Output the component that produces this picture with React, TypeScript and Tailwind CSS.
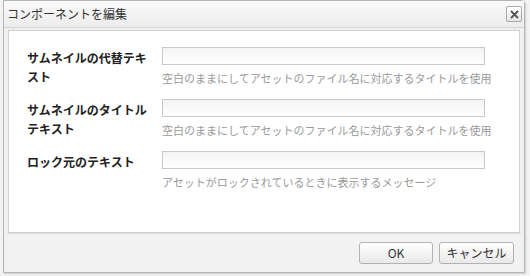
import React from 'react';

const fields = [
    { label: 'サムネイルの代替テキスト', help: '空白のままにしてアセットのファイル名に対応するタイトルを使用' },
    { label: 'サムネイルのタイトルテキスト', help: '空白のままにしてアセットのファイル名に対応するタイトルを使用' },
    { label: 'ロック元のテキスト', help: 'アセットがロックされているときに表示するメッセージ' },
];

const App = () => {
    return (
        <div
            className="w-[530px] h-[276px] bg-[#f3f3f3] overflow-hidden"
            style={{ fontFamily: '"Noto Sans CJK JP", "Noto Sans", sans-serif' }}
        >
            <div className="ml-[3px] w-[522px] h-[273px] flex flex-col border border-[#b4b4b4] rounded-tr-[4px] bg-[#f0f0f0] shadow-[1px_1px_2px_rgba(0,0,0,0.15)]">
                {/* Title bar */}
                <div className="h-[27px] flex items-center justify-between pl-[3px] pr-[2px] bg-gradient-to-b from-[#fafafa] to-[#ececec] border-b border-[#d4d4d4]">
                    <span className="text-[12px] text-[#333] leading-none">コンポーネントを編集</span>
                    <button className="w-[16px] h-[16px] flex items-center justify-center border border-[#a9a9a9] rounded-[2px] bg-gradient-to-b from-white to-[#e4e4e4]">
                        <svg width="9" height="9" viewBox="0 0 9 9">
                            <path d="M1 1L8 8M8 1L1 8" stroke="#555" strokeWidth="1.8" />
                        </svg>
                    </button>
                </div>

                {/* Body */}
                <div className="mx-[4px] mt-[2px] h-[203px] bg-white border border-[#d0d0d0] pl-[18px] pt-[16px]">
                    <div className="flex flex-col gap-[13px]">
                        {fields.map((f) => (
                            <div key={f.label} className="flex">
                                <div className="w-[135px] pr-[10px] pt-[1px] text-[12px] font-bold leading-[19px] text-[#222]">
                                    {f.label}
                                </div>
                                <div className="flex flex-col">
                                    <input
                                        className="w-[323px] h-[18px] border border-[#c9c9c9] bg-gradient-to-b from-[#f3f3f3] to-white outline-none"
                                        type="text"
                                    />
                                    <div className="mt-[5px] text-[11px] leading-[16px] text-[#9a9a9a] whitespace-nowrap">
                                        {f.help}
                                    </div>
                                </div>
                            </div>
                        ))}
                    </div>
                </div>

                {/* Footer */}
                <div className="flex-1 mx-[3px] mb-[1px] bg-[#f2f2f2] border-t border-[#dadada] flex items-center justify-end gap-[6px] pr-[7px]">
                    <button className="w-[74px] h-[22px] border border-[#b2b2b2] rounded-[3px] bg-gradient-to-b from-white to-[#e9e9e9] text-[12px] text-[#333]">
                        OK
                    </button>
                    <button className="w-[75px] h-[22px] border border-[#b2b2b2] rounded-[3px] bg-gradient-to-b from-white to-[#e9e9e9] text-[12px] text-[#333]">
                        キャンセル
                    </button>
                </div>
            </div>
        </div>
    );
};

export default App;
